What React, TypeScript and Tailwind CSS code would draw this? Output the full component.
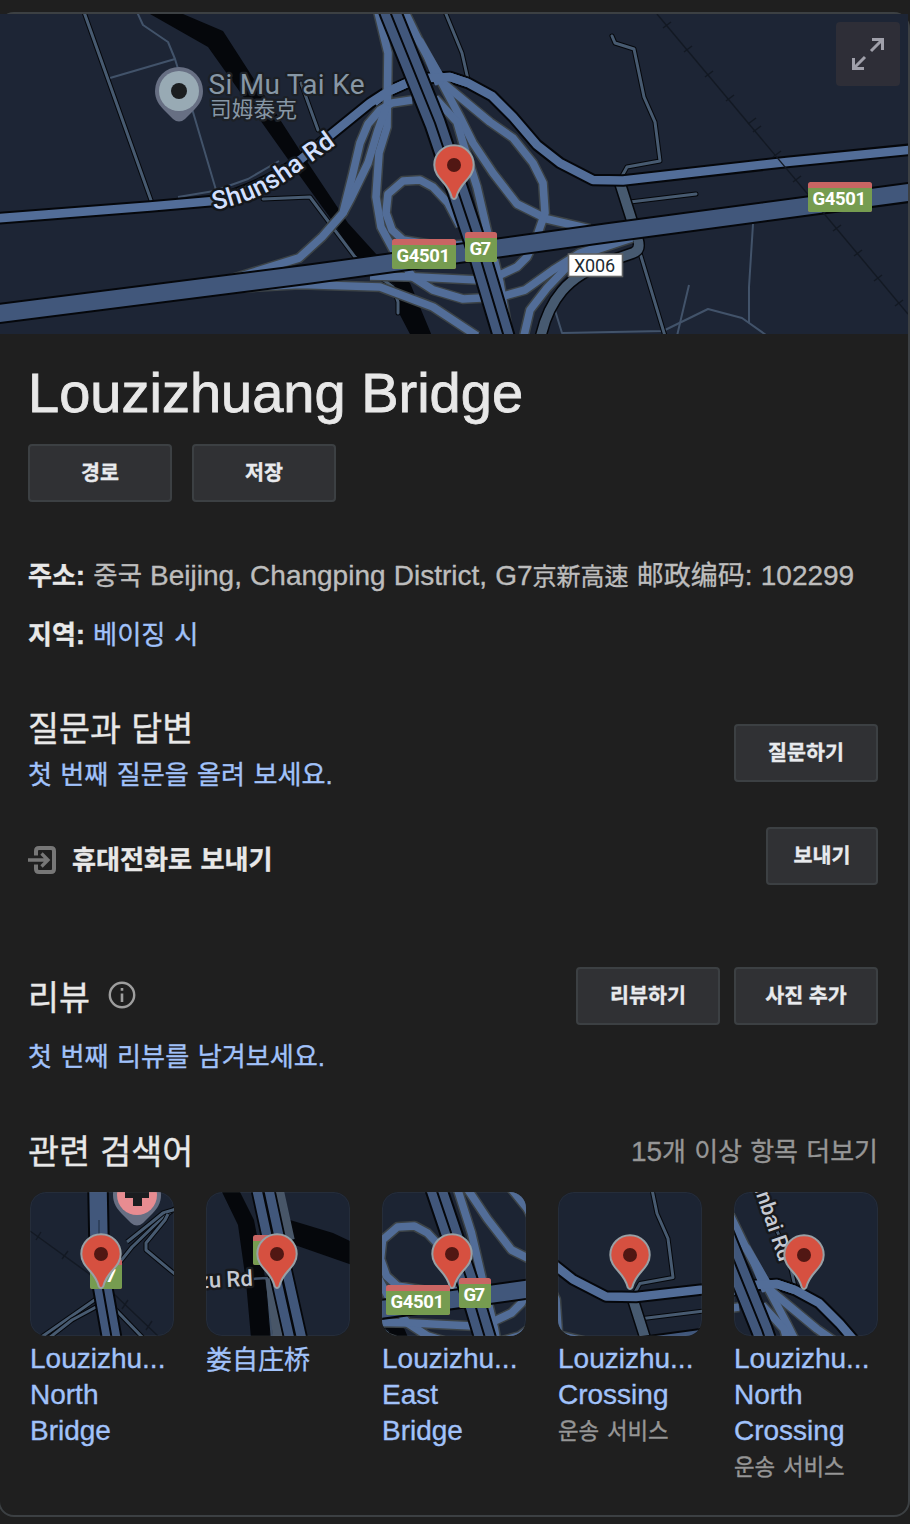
import type { ReactNode } from 'react';

const ARTERIAL =
  'M-5 218.500 L150 206.500 L213 201 Q262 188 300 160 L333 133 L370 103 L387 92 L407 83 L428 78 L450 77 L468 83 L492 96 L513 117 L537 145 L560 163 L593 180 L623 180.500 L787 162 L912 149.500';
const G4501 = 'M-5 314 L310 274 L610 232.500 L912 192';
const G7 = 'M385 -2 L391 14 L435 123 L460 197 L481 260 L506 344';

const RAMPS = [
  'M377 8 L388 53 L387 127 L379 153 L376 197 L381 227 L395 253 L413 277 L433 290 L463 299 L500 297 L525 290 L553 270 L580 253 L612 242',
  'M412 100 L392 103 L380 110 L368 124 L360 143 L353 173 L343 213 L322 237 L299 258 L225 281',
  'M387 105 L378 130 L368 163 L350 200 L343 213',
  'M460 226 L448 203 L433 187 L420 180 L403 181 L388 194 L386 213 L392 230 L403 240 L440 246 L470 244',
  'M403 8 L420 43 L442 83 L460 117 L473 143 L493 173 L517 204 L547 219 L590 229',
  'M443 83 L490 122 L513 138 L533 163 L543 183 L545 213 L538 233 L527 257 L517 267 L500 275',
  'M435 98 L457 122 L463 143 L477 187 L487 230 L500 283 L507 325',
  'M215 289 L300 284.500 L380 287 L433 307 L477 336',
  'M370 276 L417 277 L478 280',
  'M523 340 L530 310 L547 288 L567 267 L590 252 L632 238',
];

const STREETS = [
  'M301 83 L318 130',
  'M263 199 L310 197 L355 257 L377 275 L393 287 L398 302 L398 313',
  'M438 -15 L446 14 L462 53 L469 84',
  'M612 36 L615 43 L634 49 L644 97 L655 122 L660 161 L627 167 L622 176',
  'M630 202 L696 194',
  'M640 253 L665 336',
  'M84 12 L152 203',
];

const PATHS = [
  'M137 12 L143 25 L168 42 L175 59 L179 72 L193 112 L216 190',
  'M178 197 L214 191 L248 179 L279 161',
  'M110 78 L175 59',
  'M689 285 L680 323 L677 336',
  'M554 307 L562 333 L663 331 L708 309 L742 318 L766 335',
  'M753 224 L749 287 L749 323',
];

const TIES = [
  [667, 25], [688, 49], [709, 74], [730, 98], [752, 121], [757, 129], [777, 154],
  [797, 179], [837, 228], [858, 253], [878, 278], [899, 303],
];

function Ties() {
  return (
    <g stroke="#131923" strokeWidth="1.4">
      {TIES.map(([x, y]) => (
        <path key={`${x}-${y}`} d={`M${x - 4} ${y + 3} L${x + 4} ${y - 3}`} />
      ))}
    </g>
  );
}

function Cased({ d, w, c, color, casing }: { d: string; w: number; c: number; color: string; casing: string }) {
  return (
    <g fill="none" strokeLinejoin="round">
      <path d={d} stroke={casing} strokeWidth={w + c * 2} />
      <path d={d} stroke={color} strokeWidth={w} />
    </g>
  );
}

function Roads() {
  return (
    <g fill="none" strokeLinejoin="round">
      <path
        d="M150 14 L183 14 L223 31 L308 163 L348 223 L377 255 L410 283 L432 336 L411 336 L400 315 L395 285 L352 255 L336 226 L297 172 L208 47 Z"
        fill="#05070b"
      />
      {PATHS.map((d) => (
        <path key={d} d={d} stroke="#42536a" strokeWidth="2" />
      ))}
      {STREETS.map((d) => (
        <path key={d} d={d} stroke="#05070b" strokeWidth="5" strokeLinecap="round" />
      ))}
      {STREETS.map((d) => (
        <path key={d} d={d} stroke="#475a70" strokeWidth="3" strokeLinecap="round" />
      ))}
      <Cased
        d="M619 180 L638 240 Q641 250 633 253 L610 261 Q578 272 562 291 Q546 310 540 340"
        w={9.5}
        c={1.5}
        color="#475a70"
        casing="#05070b"
      />
      <Cased d={ARTERIAL} w={8.5} c={2} color="#526d98" casing="#05070b" />
      <g stroke="#3c4347" strokeWidth="10.6">
        {RAMPS.map((d) => (
          <path key={d} d={d} />
        ))}
      </g>
      <path d="M417 36 L422 40 L445 80 L436 84 Z" fill="#526d98" stroke="#526d98" strokeWidth="3" />
      <g stroke="#526d98" strokeWidth="7.6">
        {RAMPS.map((d) => (
          <path key={d} d={d} />
        ))}
      </g>
      <path d="M374 102.500 L387 92 L407 83 L428 78 L450 77 L468 83" stroke="#526d98" strokeWidth="8.500" />
      <path d={G4501} stroke="#05070b" strokeWidth="21" />
      <path d={G4501} stroke="#41577b" strokeWidth="17" />
      <path d={G7} stroke="#05070b" strokeWidth="23.500" />
      <path d={G7} stroke="#41577b" strokeWidth="19.500" />
      <path d={G7} stroke="#05070b" strokeWidth="2" />
      <path d="M657 14 L908 314" stroke="#131923" strokeWidth="1.4" />
    </g>
  );
}

function Shield({ x, y, label, w }: { x: number; y: number; label: string; w: number }) {
  return (
    <g>
      <rect x={x} y={y} width={w} height="30" rx="2.5" fill="#c96563" />
      <path d={`M${x} ${y + 6} h${w} v21.5 q0 2.5 -2.5 2.5 h${5 - w} q-2.5 0 -2.5 -2.5 Z`} fill="#769c50" />
      <text
        x={x + 4.6}
        y={y + 23.3}
        textLength={w - 10.5}
        lengthAdjust="spacing"
        fill="#fff"
        className="font-[Roboto,sans-serif] text-[18.5px] font-bold"
      >
        {label}
      </text>
    </g>
  );
}

function Pin({ x, y }: { x: number; y: number }) {
  return (
    <g transform={`translate(${x} ${y})`}>
      <path
        d="M-19.7 0 A19.7 19.7 0 1 1 19.7 0 C19.7 7 16 11.5 11 17 C6 22.5 3.6 27 2.2 32.5 Q0 35.5 -2.2 32.5 C-3.6 27 -6 22.5 -11 17 C-16 11.5 -19.7 7 -19.7 0Z"
        fill="#d65040"
        stroke="#98a0a5"
        strokeWidth="2"
      />
      <circle r="7" fill="#511713" />
    </g>
  );
}

function PlacePin({ x, y, fill, children }: { x: number; y: number; fill: string; children: ReactNode }) {
  return (
    <g transform={`translate(${x} ${y})`}>
      <path
        d="M-24 0 A24 24 0 1 1 24 0 C24 8 20 14 15 19 L6 28 Q0 33 -6 28 L-15 19 C-20 14 -24 8 -24 0Z"
        fill="#676f83"
      />
      <circle r="20" fill={fill} />
      {children}
    </g>
  );
}

function MainMap() {
  return (
    <svg viewBox="0 14 908 320" width="908" height="320" className="block bg-[#1d2535]">
      <Roads />
      <Ties />
      <PlacePin x={179} y={91} fill="#98aab4">
        <circle r="8" fill="#1b1e20" />
      </PlacePin>
      <g stroke="#1c2026" strokeWidth="4.5" strokeLinejoin="round" paintOrder="stroke" fill="#8797a5">
        <text x="208.5" y="94" textLength="156" className="font-[Roboto,sans-serif] text-[28px]">
          Si Mu Tai Ke
        </text>
        <text x="210" y="117" textLength="87" className="font-['Noto_Sans_CJK_SC',sans-serif] text-[21.7px]">
          司姆泰克
        </text>
      </g>
      <path id="shunsha" d="M214 210 C250 203 275 190 301 170 L345 138" fill="none" />
      <text
        stroke="#14171c"
        strokeWidth="5"
        strokeLinejoin="round"
        paintOrder="stroke"
        fill="#d3e0ff"
        className="font-[Roboto,sans-serif] text-[25.5px] font-medium"
      >
        <textPath href="#shunsha" textLength="140">
          Shunsha Rd
        </textPath>
      </text>
      <Shield x={808} y={182} w={64} label="G4501" />
      <Shield x={392} y={239} w={64} label="G4501" />
      <Shield x={465} y={232} w={32} label="G7" />
      <rect x="568.5" y="254" width="54" height="22.5" fill="#fff" stroke="#5f6163" strokeWidth="1.6" />
      <text x="574" y="271.5" textLength="41" className="fill-[#1d2b33] font-[Roboto,sans-serif] text-[18px]">
        X006
      </text>
      <Pin x={454} y={165} />
      <rect x="836" y="22" width="64" height="64" rx="4" fill="#2e2e37" />
      <path
        d="M872 39.5 H882.5 V50 M882.5 39.5 L871 51 M853.5 58 V68.5 H864 M853.5 68.5 L865 57"
        fill="none"
        stroke="#a0a0aa"
        strokeWidth="3"
      />
    </svg>
  );
}

function Thumb({ origin, children }: { origin?: [number, number]; children?: ReactNode }) {
  return (
    <svg viewBox="0 0 144 144" width="144" height="144" className="block overflow-hidden rounded-2xl bg-[#1c2433]">
      {origin && (
        <g transform={`translate(${-origin[0]} ${-origin[1]})`}>
          <Roads />
        </g>
      )}
      {children}
      <rect x="0.5" y="0.5" width="143" height="143" rx="15.5" fill="none" stroke="#6b7076" strokeOpacity="0.12" />
    </svg>
  );
}

function NorthBridgeMap() {
  const roads = [
    'M10 146 L66 107',
    'M19 146 L42 128 L66 115',
    'M86 118 L114 147',
    'M90 70 L102 55 L132 26 L146 16',
    'M97 50 L122 30 L133 21 L146 17',
    'M146 83 L116 58 L116 51 L135 28 L138 22',
  ];
  return (
    <Thumb>
      <g fill="none">
        <path d="M0 39 L58 81 L85 103 L128 144" stroke="#131923" strokeWidth="1.4" />
        <g stroke="#131923" strokeWidth="1.4">
          <path d="M6 48 L11 40 M32 67 L38 59 M92 117 L98 108 M116 138 L122 129" />
        </g>
        {roads.map((d) => (
          <Cased key={d} d={d} w={3} c={1} color="#475a70" casing="#05070b" />
        ))}
        <Cased d="M68 -2 L69 50 L73 97 L82 148" w={17.5} c={2} color="#41577b" casing="#05070b" />
        <path d="M70 60 L73 97 L82 148" stroke="#05070b" strokeWidth="2" />
        <path d="M69 28 V42" stroke="#1f2c40" strokeWidth="1" />
      </g>
      <PlacePin x={107} y={3} fill="#e78c91">
        <path d="M-12 -10 H12 V3 H5 V11 H-4 V3 H-12Z" fill="#1a1c1f" />
      </PlacePin>
      <Shield x={60} y={67} w={32} label="G7" />
      <Pin x={71} y={62} />
    </Thumb>
  );
}

function SecondBridgeMap() {
  return (
    <Thumb>
      <path d="M16 0 H34 L48 28 L59 85 L64 146 H45 L40 90 L32 33Z" fill="#05070b" />
      <path d="M84 28 L127 41 L146 50 V73 L86 52Z" fill="#05070b" />
      <g fill="none">
        <Cased d="M46 87 L61 86 L66 146" w={2.5} c={1} color="#3f5067" casing="#05070b" />
        <path d="M73 -2 L84 48 M64 86 L72 146" stroke="#485668" strokeWidth="9.5" />
        <Cased d="M57 -2 L73 72 L90 148" w={21} c={1.8} color="#41577b" casing="#05070b" />
        <path d="M57 -2 L73 72 L90 148" stroke="#05070b" strokeWidth="2.5" />
      </g>
      <text
        x="-8"
        y="96"
        transform="rotate(-3 0 94)"
        stroke="#17191d"
        strokeWidth="5"
        strokeLinejoin="round"
        paintOrder="stroke"
        fill="#c6cad3"
        className="font-[Roboto,sans-serif] text-[22px] font-medium"
      >
        zu Rd
      </text>
      <Shield x={47} y={43} w={32} label="G7" />
      <Pin x={71} y={62} />
    </Thumb>
  );
}

function EastBridgeMap() {
  return (
    <Thumb origin={[387.5, 146]}>
      <Pin x={70} y={62} />
      <Shield x={4} y={93} w={64} label="G4501" />
      <Shield x={77} y={86} w={32} label="G7" />
    </Thumb>
  );
}

function CrossingMap() {
  return (
    <Thumb origin={[545, 75.5]}>
      <Pin x={72} y={63} />
    </Thumb>
  );
}

function NorthCrossingMap() {
  return (
    <Thumb origin={[407, -15]}>
      <text
        transform="translate(18 -9) rotate(71)"
        stroke="#17191d"
        strokeWidth="5"
        strokeLinejoin="round"
        paintOrder="stroke"
        fill="#c6cad3"
        className="font-[Roboto,sans-serif] text-[21.5px] font-medium"
      >
        unbai Rd
      </text>
      <Pin x={70} y={63} />
    </Thumb>
  );
}

function Button({ children, narrow = false }: { children: ReactNode; narrow?: boolean }) {
  return (
    <button
      className={`flex h-[58px] shrink-0 items-center justify-center rounded-[4px] border-2 border-[#3c4043] bg-[#303134] text-[20.6px] leading-none font-bold text-[#e8eaed] ${narrow ? 'w-28' : 'w-36'}`}
    >
      {children}
    </button>
  );
}

function Related({ map, lines, kind }: { map: ReactNode; lines: string[]; kind?: string }) {
  return (
    <div className="w-36">
      {map}
      <div className="mt-[5px] text-[28px] leading-9 whitespace-nowrap text-[#a1c2fa]">
        {lines.map((l) => (
          <div key={l} className="h-9">
            {l}
          </div>
        ))}
      </div>
      {kind && (
        <div className="h-9 pt-px text-[22.4px] leading-9 [word-spacing:1.5px] text-[#969696]">{kind}</div>
      )}
    </div>
  );
}

export default function App() {
  return (
    <div className="h-[1524px] w-[910px] overflow-hidden bg-[#1f1f1f] pt-3 font-['Liberation_Sans','Noto_Sans_CJK_KR',sans-serif] text-[#e8e8e8]">
      <div className="-ml-0.5 h-[1505px] w-[912px] rounded-2xl border-2 border-[#3c4043]">
        <MainMap />
        <div className="pr-[30px] pl-7 [-webkit-text-stroke:0.35px]">
          <h1 className="mt-[19px] h-20 text-[56px] leading-[80px] whitespace-nowrap [-webkit-text-stroke:0.8px]">
            Louzizhuang Bridge
          </h1>
          <div className="mt-[11px] flex gap-5">
            <Button>경로</Button>
            <Button>저장</Button>
          </div>
          <div className="mt-[52px] h-10 text-[28px] leading-10 [word-spacing:0.4px] whitespace-nowrap text-[#bdbdbd]">
            <span className="font-bold text-[#e8e8e8]">
              <span className="text-[26px]">주소</span>:
            </span>{' '}
            <span className="text-[26.4px]">중국</span> Beijing, Changping District, G7
            <span className="text-[24px]">京新高速</span>{' '}
            <span className="font-['Noto_Sans_CJK_SC'] text-[27px]">邮政编码</span>: 102299
          </div>
          <div className="mt-[21px] h-10 text-[28px] leading-10 whitespace-nowrap">
            <span className="font-bold">
              <span className="text-[26px]">지역</span>:
            </span>{' '}
            <span className="text-[26.3px] [word-spacing:1.4px] text-[#a1c2fa]">베이징 시</span>
          </div>

          <section className="mt-[52px] flex justify-between">
            <div>
              <h2 className="h-11 text-[33.7px] leading-[44px] [word-spacing:1px]">질문과 답변</h2>
              <p className="mt-1 h-10 text-[26.1px] leading-10 [word-spacing:1.1px] text-[#a1c2fa]">
                첫 번째 질문을 올려 보세요.
              </p>
            </div>
            <div className="pt-[17px]">
              <Button>질문하기</Button>
            </div>
          </section>

          <section className="mt-[32px] flex items-center justify-between">
            <div className="flex items-center gap-4 pt-2">
              <svg width="28" height="28" viewBox="0 0 28 28" fill="none" stroke="#777">
                <path
                  d="M8 9.500 V5 Q8 2 11 2 H23 Q26 2 26 5 V23 Q26 26 23 26 H11 Q8 26 8 23 V18.500"
                  strokeWidth="4"
                />
                <path d="M0 14 H20 M13.500 7.500 L20 14 L13.500 20.500" strokeWidth="3.300" />
              </svg>
              <span className="text-[26.1px] leading-10 font-bold [word-spacing:1.3px]">휴대전화로 보내기</span>
            </div>
            <Button narrow>보내기</Button>
          </section>

          <section className="mt-[82px] flex items-start justify-between">
            <div>
              <div className="flex h-[58px] items-center gap-[18px]">
                <h2 className="pt-1 text-[33.7px] leading-[54px]">리뷰</h2>
                <svg width="28" height="28" viewBox="0 0 28 28" fill="none" stroke="#9e9e9e" className="mb-0.5">
                  <circle cx="14" cy="14" r="12.200" strokeWidth="2.400" />
                  <path d="M14 12.500 V21 M14 7 V9.800" strokeWidth="2.600" />
                </svg>
              </div>
              <p className="mt-3 h-10 text-[26.1px] leading-10 [word-spacing:1.3px] text-[#a1c2fa]">
                첫 번째 리뷰를 남겨보세요.
              </p>
            </div>
            <div className="flex gap-3.5">
              <Button>리뷰하기</Button>
              <Button>사진 추가</Button>
            </div>
          </section>

          <section className="mt-[53px]">
            <div className="flex h-11 items-center justify-between">
              <h2 className="text-[33.7px] leading-[44px] [word-spacing:1px]">관련 검색어</h2>
              <span className="text-[28px] leading-[44px] [word-spacing:0.4px] text-[#969696]">
                15<span className="text-[26px]">개</span> <span className="text-[26px]">이상</span>{' '}
                <span className="text-[26px]">항목</span> <span className="text-[26px]">더보기</span>
              </span>
            </div>
            <div className="mt-[18px] ml-0.5 flex gap-8">
              <Related map={<NorthBridgeMap />} lines={['Louzizhu...', 'North', 'Bridge']} />
              <div className="w-36">
                <SecondBridgeMap />
                <div className="mt-1 h-9 font-['Noto_Sans_CJK_SC',sans-serif] text-[26px] leading-9 text-[#a1c2fa]">
                  娄自庄桥
                </div>
              </div>
              <Related map={<EastBridgeMap />} lines={['Louzizhu...', 'East', 'Bridge']} />
              <Related map={<CrossingMap />} lines={['Louzizhu...', 'Crossing']} kind="운송 서비스" />
              <Related map={<NorthCrossingMap />} lines={['Louzizhu...', 'North', 'Crossing']} kind="운송 서비스" />
            </div>
          </section>
        </div>
      </div>
    </div>
  );
}
